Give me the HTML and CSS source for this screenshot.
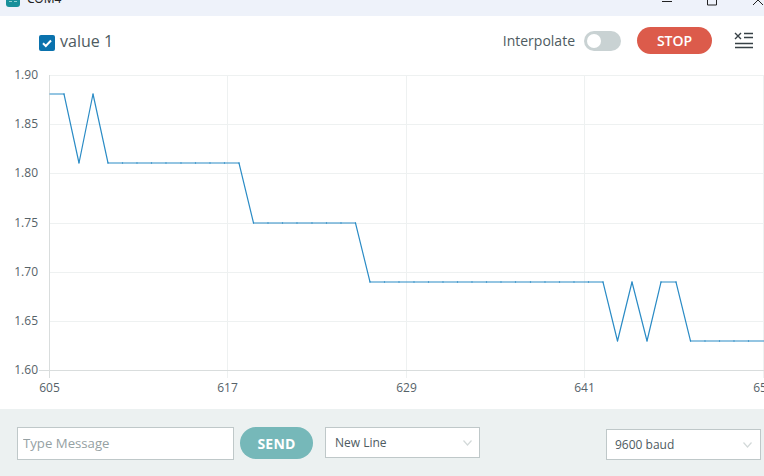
FILE: index.html
```html
<!DOCTYPE html>
<html lang="en">
<head>
  <meta charset="UTF-8">
  <title>COM4</title>
  <link rel="stylesheet" href="styles.css">
</head>
<body>
  <div class="titlebar">
    <svg class="app-icon" width="14" height="7" viewBox="0 0 14 7">
      <path d="M0 0h14v4a3 3 0 0 1-3 3H3a3 3 0 0 1-3-3z" fill="#17909a"/>
      <path d="M3 1.500h3M8 1.500h3" stroke="#8fd0d0" stroke-width="1"/>
    </svg>
    <span class="title">COM4</span>
    <div class="win-buttons">
      <svg width="114" height="16" viewBox="0 0 114 16">
        <path d="M12 1.500h10M57.500 -3h9v8h-9zM113 5l-5-5-5 5" fill="none" stroke="#222" stroke-width="1"/>
      </svg>
    </div>
  </div>

  <div class="toolbar">
    <label class="legend">
      <span class="check">
        <svg width="16" height="16" viewBox="0 0 16 16"><path d="M4 8.300l2.800 2.700L12 5.500" fill="none" stroke="#fff" stroke-width="2"/></svg>
      </span>
      value 1
    </label>
    <div class="controls">
      <span class="interp">Interpolate</span>
      <span class="toggle"><span class="knob"></span></span>
      <button class="stop">STOP</button>
      <svg class="clear" width="20" height="18" viewBox="0 0 20 18">
        <path d="M1 1l6 6M7 1l-6 6" fill="none" stroke="#374146" stroke-width="1.400"/>
        <path d="M10 1.500h9M10 5.500h9M1 11.500h18M1 15.500h18" fill="none" stroke="#374146" stroke-width="1.300"/>
      </svg>
    </div>
  </div>

  <svg class="chart" width="764" height="350" viewBox="0 59 764 350">
    <defs>
      <marker id="dot" markerUnits="userSpaceOnUse" markerWidth="3" markerHeight="3" refX="1.500" refY="1.500">
        <circle cx="1.500" cy="1.500" r="0.650" fill="#2a8bc5"/>
      </marker>
    </defs>
    <g class="grid">
      <path d="M49.500 75.500H764M49.500 124.500H764M49.500 173.500H764M49.500 223.500H764M49.500 272.500H764M49.500 321.500H764"/>
      <path d="M227.500 75V378M406.500 75V378M584.500 75V378M763.500 75V378"/>
    </g>
    <g class="axis">
      <path d="M49.500 75V378M39 370.500H764"/>
    </g>
    <g class="labels">
      <text x="38" y="79" text-anchor="end">1.90</text>
      <text x="38" y="128" text-anchor="end">1.85</text>
      <text x="38" y="177" text-anchor="end">1.80</text>
      <text x="38" y="227" text-anchor="end">1.75</text>
      <text x="38" y="276" text-anchor="end">1.70</text>
      <text x="38" y="325" text-anchor="end">1.65</text>
      <text x="38" y="374" text-anchor="end">1.60</text>
      <text x="49.500" y="392" text-anchor="middle">605</text>
      <text x="227.500" y="392" text-anchor="middle">617</text>
      <text x="406.500" y="392" text-anchor="middle">629</text>
      <text x="584.500" y="392" text-anchor="middle">641</text>
      <text x="763.500" y="392" text-anchor="middle">653</text>
    </g>
    <polyline class="series" marker-mid="url(#dot)" points="49.500,94 64,94 79,163 93,94 108,163 122.500,163 137,163 151.500,163 166,163 181,163 195.500,163 210,163 224.500,163 239,163 253.500,223 268,223 282.500,223 297,223 312,223 326.500,223 341,223 355.500,223 370,282 384.500,282 399,282 414,282 428.500,282 443,282 457.500,282 472,282 486.500,282 501,282 515.500,282 530.500,282 545,282 559.500,282 574,282 588.500,282 603,282 617.500,341 632,282 647,341 661,282 676,282 690.500,341 705,341 719.500,341 734,341 748.500,341 764,341"/>
  </svg>

  <div class="footer">
    <input class="message" type="text" placeholder="Type Message">
    <button class="send">SEND</button>
    <div class="select newline">New Line
      <svg width="9" height="6" viewBox="0 0 9 6"><path d="M.5 .5l4 4.500 4-4.500" fill="none" stroke="#d3d9d9" stroke-width="1.200"/></svg>
    </div>
    <div class="select baud">9600 baud
      <svg width="9" height="6" viewBox="0 0 9 6"><path d="M.5 .5l4 4.500 4-4.500" fill="none" stroke="#d3d9d9" stroke-width="1.200"/></svg>
    </div>
  </div>
</body>
</html>
```

FILE: styles.css
```css
* {
  box-sizing: border-box;
}

html, body {
  height: 100%;
}

body {
  margin: 0;
  overflow: hidden;
  background: #fff;
  font-family: "Open Sans", sans-serif;
  color: #4e5b61;
}

.titlebar {
  height: 16px;
  background: #eef2fa;
  display: flex;
  align-items: flex-start;
  overflow: hidden;
  padding-left: 6px;
}

.app-icon {
  display: block;
}

.title {
  font-family: "Noto Sans", sans-serif;
  font-size: 12px;
  line-height: 16px;
  margin-top: -9px;
  margin-left: 7px;
  color: #222;
}

.win-buttons {
  margin-left: auto;
}

.win-buttons svg {
  display: block;
}

.toolbar {
  height: 43px;
  padding: 6px 10px 0 39px;
  display: flex;
  align-items: center;
  justify-content: space-between;
}

.legend {
  display: flex;
  align-items: center;
  gap: 5px;
  margin-top: 1px;
  font-size: 16px;
}

.check {
  width: 16px;
  height: 16px;
  margin-top: 4px;
  background: #0a72ad;
  border-radius: 2px;
  display: block;
}

.check svg {
  display: block;
}

.controls {
  display: flex;
  align-items: center;
}

.interp {
  font-size: 14px;
  margin-right: 9px;
}

.toggle {
  width: 37px;
  height: 20px;
  border-radius: 10px;
  background: #c9d2d3;
  display: block;
  padding: 3px;
}

.knob {
  display: block;
  width: 14px;
  height: 14px;
  border-radius: 50%;
  background: #fff;
}

.stop {
  width: 75px;
  height: 27px;
  margin-left: 16px;
  border: 0;
  border-radius: 14px;
  background: #dc5b4b;
  color: #fff;
  font-family: "Open Sans", sans-serif;
  font-size: 14px;
  font-weight: 600;
  padding: 0;
}

.clear {
  margin-left: 22px;
}

.chart {
  display: block;
}

.grid path {
  fill: none;
  stroke: #eef1f1;
  stroke-width: 1;
}

.axis path {
  fill: none;
  stroke: #d9dddd;
  stroke-width: 1;
}

.labels text {
  font-family: "Open Sans", sans-serif;
  font-size: 12px;
  fill: #566268;
}

.series {
  fill: none;
  stroke: #2a8bc5;
  stroke-width: 1.200;
}

.footer {
  height: 67px;
  background: #ecf1f1;
  display: flex;
  align-items: flex-start;
  padding: 18px 3px 0 17px;
}

.message {
  width: 217px;
  height: 33px;
  border: 1px solid #bfc8c9;
  background: #fff;
  padding: 0 5px 2px;
  font-family: "Open Sans", sans-serif;
  font-size: 13.200px;
  outline: none;
}

.message::placeholder {
  color: #95a1a3;
  opacity: 1;
}

.send {
  width: 73px;
  height: 32px;
  margin-left: 6px;
  border: 0;
  border-radius: 16px;
  background: #76b8b9;
  color: #fff;
  font-family: "Open Sans", sans-serif;
  font-size: 14px;
  font-weight: 700;
  letter-spacing: 0.2px;
  padding: 0;
}

.select {
  width: 155px;
  height: 31px;
  border: 1px solid #bfc8c9;
  background: #fff;
  display: flex;
  align-items: center;
  justify-content: space-between;
  padding: 0 7px 0 9px;
  font-size: 12px;
  color: #4e5b61;
}

.newline {
  margin-left: 12px;
}

.baud {
  margin-left: auto;
  margin-top: 2px;
  padding-left: 8px;
  padding-right: 8px;
}
```
